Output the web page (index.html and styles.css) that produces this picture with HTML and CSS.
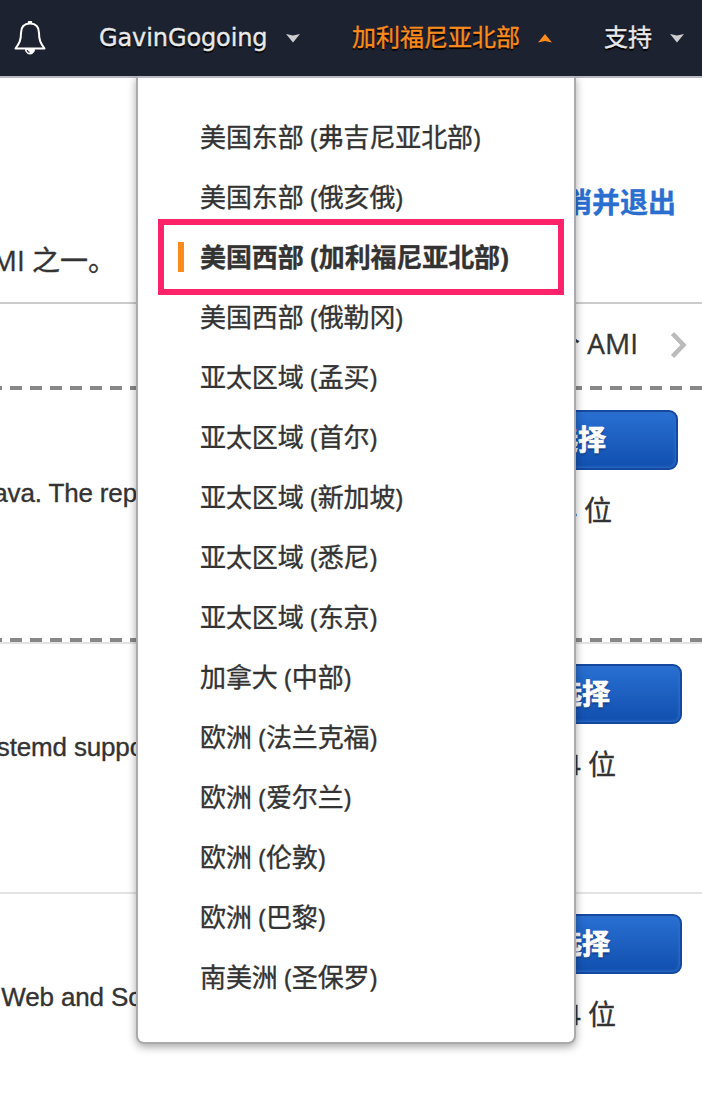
FILE: index.html
```html
<!DOCTYPE html>
<html lang="zh-CN">
<head>
<meta charset="utf-8">
<title>EC2</title>
<link rel="stylesheet" href="styles.css">
</head>
<body>
<header class="nav">
  <svg class="bell" width="32" height="36" viewBox="0 0 32 36" fill="none" stroke="#fff" stroke-width="2" stroke-linejoin="round">
    <path d="M16 3.500C10 3.500 7 7 7 13C7 20 5.500 23 1.500 28.500H30.500C26.500 23 25 20 25 13C25 7 22 3.500 16 3.500Z"/>
    <path d="M14.800 3V2H17.200V3" stroke-width="2"/>
    <path d="M11.500 29.500A4.500 4.500 0 0 0 20.500 29.500Z" fill="#fff" stroke-width="1"/>
    <path d="M13.200 30Q13.500 32 15.500 32.400" stroke="#1d2230" stroke-width="1.200"/>
  </svg>
  <span class="account">GavinGogoing</span>
  <svg class="caret caret-account" width="14" height="9" viewBox="0 0 14 9"><path d="M0 0L7 1.500L14 0L7 8.500Z" fill="#ccc"/></svg>
  <span class="current">加利福尼亚北部</span>
  <svg class="caret caret-region" width="14" height="9" viewBox="0 0 14 9"><path d="M0 8.500L7 0L14 8.500L7 7Z" fill="#fb8b1b"/></svg>
  <span class="support">支持</span>
  <svg class="caret caret-support" width="14" height="9" viewBox="0 0 14 9"><path d="M0 0L7 1.500L14 0L7 8.500Z" fill="#ccc"/></svg>
</header>
<main class="page">
  <section class="intro">
    <div class="exit">取消并退出</div>
    <div class="lead"><span>AMI 之一。</span></div>
  </section>
  <section class="pager">
    <span>个 AMI</span>
    <svg width="16" height="28" viewBox="0 0 16 28" fill="none" stroke="#bbb" stroke-width="4.500"><path d="M1.500 2.500L12.500 14L1.500 25.500"/></svg>
  </section>
  <div class="dashes"></div>
  <section class="ami ami-first">
    <div class="desc"><span>Java. The rep</span></div>
    <div class="action"><div class="button">选择</div><div class="bits">64 位</div></div>
  </section>
  <div class="dashes"></div>
  <section class="ami ami-ruled">
    <div class="desc desc-systemd"><span>systemd suppo</span></div>
    <div class="action"><div class="button">选择</div><div class="bits">64 位</div></div>
  </section>
  <section class="ami ami-ruled">
    <div class="desc desc-web"><span>Web and Sc</span></div>
    <div class="action"><div class="button">选择</div><div class="bits">64 位</div></div>
  </section>
</main>
<ul class="menu">
  <li>美国东部 (弗吉尼亚北部)</li>
  <li>美国东部 (俄亥俄)</li>
  <li class="selected">美国西部 (加利福尼亚北部)</li>
  <li>美国西部 (俄勒冈)</li>
  <li>亚太区域 (孟买)</li>
  <li>亚太区域 (首尔)</li>
  <li>亚太区域 (新加坡)</li>
  <li>亚太区域 (悉尼)</li>
  <li>亚太区域 (东京)</li>
  <li>加拿大 (中部)</li>
  <li>欧洲 (法兰克福)</li>
  <li>欧洲 (爱尔兰)</li>
  <li>欧洲 (伦敦)</li>
  <li>欧洲 (巴黎)</li>
  <li>南美洲 (圣保罗)</li>
</ul>
</body>
</html>
```
FILE: styles.css
```css
* { box-sizing: border-box; }
body {
  margin: 0;
  width: 702px;
  height: 1104px;
  position: relative;
  overflow: hidden;
  background: #fff;
  color: #333;
  font-family: "Open Sans", "Noto Sans CJK SC", sans-serif;
  -webkit-text-stroke: 0.35px;
}
.nav {
  display: flex;
  align-items: center;
  height: 78px;
  padding-left: 14px;
  background: #1d2230;
  border-bottom: 2px solid #b9b9c1;
  color: #e9e9e9;
  font-size: 24px;
  line-height: 36px;
  white-space: nowrap;
  text-shadow: 0 2px 1px #000;
}
.nav svg, .nav span { flex: none; }
.nav span { padding-bottom: 2px; }
.nav .account { padding-bottom: 1px; }
.account { width: 170px; margin-left: 53px; font-family: "DejaVu Sans", sans-serif; letter-spacing: -0.1px; }
.caret-account { margin-left: 17px; }
.current { margin-left: 52px; color: #fb8b1b; }
.caret-region { margin-left: 18px; }
.support { margin-left: 52px; }
.caret-support { margin-left: 18px; }
.intro { height: 226px; padding-top: 104px; border-bottom: 2px solid #ccc; }
.exit {
  padding-right: 26px;
  text-align: right;
  color: #2a6fd0;
  font-size: 28px;
  font-weight: 700;
  line-height: 40px;
  height: 40px;
}
.lead {
  display: flex;
  justify-content: flex-end;
  width: 116px;
  height: 40px;
  margin-top: 18px;
  font-size: 28px;
  line-height: 40px;
  white-space: nowrap;
}
.pager {
  display: flex;
  justify-content: flex-end;
  align-items: center;
  gap: 33px;
  height: 82px;
  padding-right: 15px;
  font-size: 28px;
}
.pager span { padding-bottom: 6px; }
.dashes {
  height: 4px;
  background: repeating-linear-gradient(90deg, #888 0 12px, transparent 12px 20px) -10px 0;
  background-size: 740px 4px;
}
.ami { display: flex; justify-content: space-between; }
.ami-first { height: 248px; padding: 20px 24px 0 0; }
.ami-ruled { height: 250px; padding: 20px 20px 0 0; border-top: 2px solid #e3e3e3; }
.desc {
  display: flex;
  justify-content: flex-end;
  width: 137px;
  padding-top: 65px;
  font: 26px/36px "Liberation Sans", sans-serif;
  letter-spacing: -0.15px;
  white-space: nowrap;
}
.desc-systemd { width: 144px; }
.desc-web { width: 141px; }
.action { width: 180px; }
.button {
  height: 60px;
  padding-right: 70px;
  border: 2px solid #1549a0;
  border-radius: 9px;
  background: linear-gradient(#2870d2, #114fae);
  box-shadow: inset 0 0 3px 1px #2f70c8;
  color: #fff;
  font-size: 28px;
  font-weight: 700;
  line-height: 55px;
  text-align: right;
  text-shadow: 0 2px 2px #153d85;
  -webkit-text-stroke: 0.7px;
}
.bits { height: 40px; margin-top: 20px; padding-right: 66px; font-size: 28px; line-height: 40px; text-align: right; }
.menu {
  position: absolute;
  left: 136px;
  top: 76px;
  width: 440px;
  height: 968px;
  margin: 0;
  padding: 29px 20px 0;
  border: 2px solid #aaa;
  border-top-color: #b9b9c1;
  border-radius: 0 0 8px 8px;
  background: #fff;
  box-shadow: 0 3px 8px rgba(0, 0, 0, .35);
  list-style: none;
  font-size: 26px;
  letter-spacing: -0.12px;
  line-height: 60px;
  white-space: nowrap;
  clip-path: inset(0 -12px -16px -12px);
}
.menu li { height: 60px; padding-left: 42px; }
.menu .selected {
  display: flex;
  align-items: center;
  height: 76px;
  margin: -8px -10px -8px 0;
  padding-left: 14px;
  border: 6px solid #fc236b;
  font-weight: 700;
}
.selected::before { content: ""; width: 6px; height: 30px; margin-right: 16px; background: #fb8b1b; }
```
